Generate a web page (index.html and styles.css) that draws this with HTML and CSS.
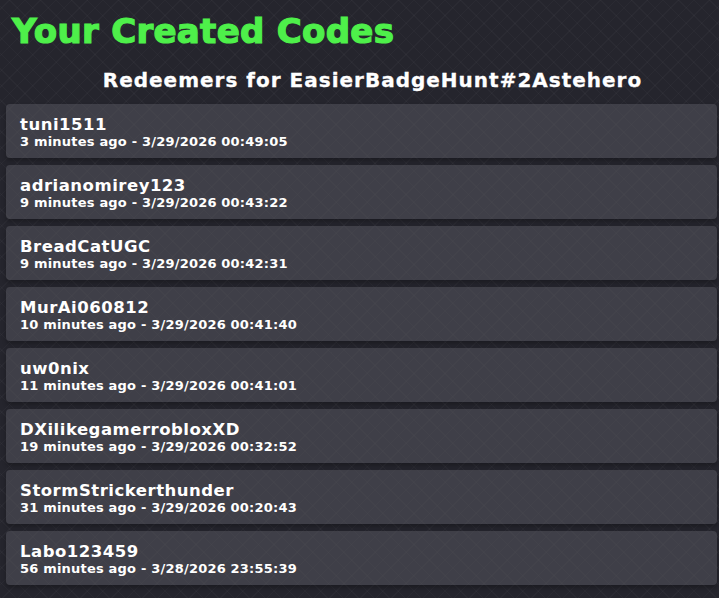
FILE: index.html
```html
<!DOCTYPE html>
<html>
<head>
<meta charset="utf-8">
<link rel="stylesheet" href="styles.css">
</head>
<body>
<div class="page">
  <h1 class="title">Your Created Codes</h1>
  <h2 class="subtitle">Redeemers for EasierBadgeHunt#2Astehero</h2>
  <div class="list">
    <div class="card"><div class="name">tuni1511</div><div class="meta">3 minutes ago - 3/29/2026 00:49:05</div></div>
    <div class="card"><div class="name">adrianomirey123</div><div class="meta">9 minutes ago - 3/29/2026 00:43:22</div></div>
    <div class="card"><div class="name">BreadCatUGC</div><div class="meta">9 minutes ago - 3/29/2026 00:42:31</div></div>
    <div class="card"><div class="name">MurAi060812</div><div class="meta">10 minutes ago - 3/29/2026 00:41:40</div></div>
    <div class="card"><div class="name">uw0nix</div><div class="meta">11 minutes ago - 3/29/2026 00:41:01</div></div>
    <div class="card"><div class="name">DXilikegamerrobloxXD</div><div class="meta">19 minutes ago - 3/29/2026 00:32:52</div></div>
    <div class="card"><div class="name">StormStrickerthunder</div><div class="meta">31 minutes ago - 3/29/2026 00:20:43</div></div>
    <div class="card"><div class="name">Labo123459</div><div class="meta">56 minutes ago - 3/28/2026 23:55:39</div></div>
  </div>
</div>
</body>
</html>
```
FILE: styles.css
```css
html, body {
  margin: 0;
  padding: 0;
  height: 100%;
}
body {
  background-color: #25252d;
  background-image:
    repeating-linear-gradient(45deg, rgba(255,255,255,0.025) 0 1px, transparent 1px 11px),
    repeating-linear-gradient(-45deg, rgba(255,255,255,0.025) 0 1px, transparent 1px 11px);
  font-family: "DejaVu Sans", "Open Sans", sans-serif;
  color: #ffffff;
  overflow: hidden;
}
.page {
  padding: 0 2px 0 6px;
}
.title {
  margin: 0;
  padding: 10px 0 0 6px;
  font-size: 34px;
  line-height: 42px;
  font-weight: 900;
  color: #4ef04a;
  -webkit-text-stroke: 1.2px #4ef04a;
  letter-spacing: 0.3px;
}
.subtitle {
  margin: 15px 0 0 0;
  font-size: 20px;
  line-height: 26px;
  font-weight: 700;
  text-align: center;
  padding-left: 22px;
  letter-spacing: 1px;
  -webkit-text-stroke: 0.3px #ffffff;
}
.list {
  display: flex;
  flex-direction: column;
  gap: 7px;
  margin-top: 11px;
}
.card {
  height: 54px;
  box-sizing: border-box;
  padding: 11px 14px 0;
  border-radius: 4px;
  background-color: rgba(85, 85, 95, 0.55);
  box-shadow: 0 3px 4px rgba(0,0,0,0.25);
}
.name {
  font-size: 16.5px;
  line-height: 19px;
  font-weight: 700;
  letter-spacing: 0.5px;
}
.meta {
  font-size: 13px;
  line-height: 16px;
  font-weight: 700;
  letter-spacing: 0.2px;
}
```
